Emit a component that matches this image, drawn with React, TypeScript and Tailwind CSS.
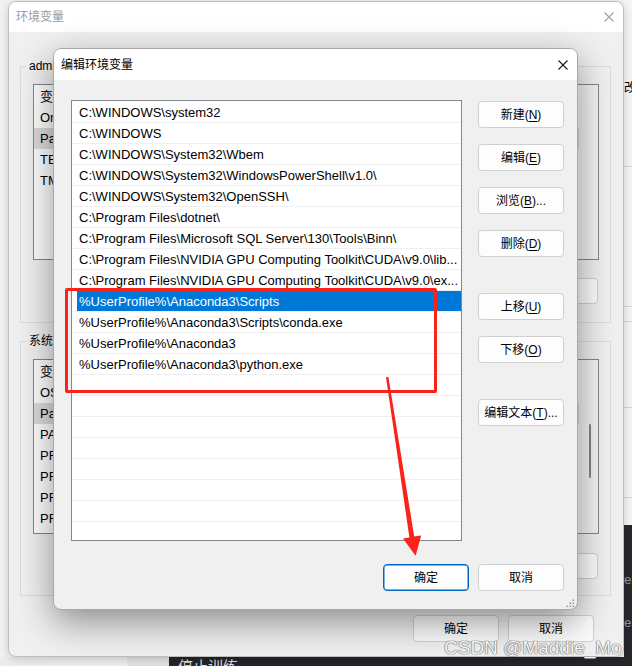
import React from "react";

const FONT = "font-['Liberation_Sans','Noto_Sans_CJK_SC',sans-serif]";

const PATHS = [
  "C:\\WINDOWS\\system32",
  "C:\\WINDOWS",
  "C:\\WINDOWS\\System32\\Wbem",
  "C:\\WINDOWS\\System32\\WindowsPowerShell\\v1.0\\",
  "C:\\WINDOWS\\System32\\OpenSSH\\",
  "C:\\Program Files\\dotnet\\",
  "C:\\Program Files\\Microsoft SQL Server\\130\\Tools\\Binn\\",
  "C:\\Program Files\\NVIDIA GPU Computing Toolkit\\CUDA\\v9.0\\lib...",
  "C:\\Program Files\\NVIDIA GPU Computing Toolkit\\CUDA\\v9.0\\ex...",
  "%UserProfile%\\Anaconda3\\Scripts",
  "%UserProfile%\\Anaconda3\\Scripts\\conda.exe",
  "%UserProfile%\\Anaconda3",
  "%UserProfile%\\Anaconda3\\python.exe",
];

const USER_VARS = ["变量", "OneDrive", "Path", "TEMP", "TMP"];
const SYS_VARS = [
  "变量",
  "OS",
  "Path",
  "PATHEXT",
  "PROCESSOR_ARCHITECTURE",
  "PROCESSOR_IDENTIFIER",
  "PROCESSOR_LEVEL",
  "PROCESSOR_REVISION",
];

function CloseIcon({ color }: { color: string }) {
  return (
    <svg width="10" height="10" viewBox="0 0 10 10">
      <path d="M0.5 0.5L9.5 9.5M9.5 0.5L0.5 9.5" stroke={color} strokeWidth="1.1" />
    </svg>
  );
}

function Btn({
  label,
  mn,
  rest = "",
  primary = false,
  h = "h-[27px]",
}: {
  label: string;
  mn?: string;
  rest?: string;
  primary?: boolean;
  h?: string;
}) {
  return (
    <div
      className={`w-[86px] ${h} shrink-0 rounded-[4px] border bg-[#fdfdfd] flex items-center justify-center text-[12px] text-black ${
        primary ? "border-[#0067c0] shadow-[inset_0_0_0_0.5px_#0067c0]" : "border-[#d0d0d0]"
      }`}
    >
      {label}
      {mn && (
        <>
          (<span className="underline underline-offset-2">{mn}</span>){rest}
        </>
      )}
    </div>
  );
}

function VarList({ rows, h }: { rows: string[]; h: string }) {
  return (
    <div className={`${h} border border-[#828790] bg-white flex overflow-hidden`}>
      <div className="flex-1 flex flex-col pt-[1px]">
        {rows.map((r, i) => (
          <div
            key={r}
            className={`h-[21px] shrink-0 flex items-center pl-[6px] text-[13px] ${
              i === 2 ? "bg-[#dcdcdc]" : ""
            } text-black`}
          >
            {r}
          </div>
        ))}
      </div>
      <div className="w-[19px] bg-[#f3f3f3] relative" />
    </div>
  );
}

function BackgroundWindow() {
  return (
    <div className="absolute left-[8px] top-[1px] w-[616px] h-[656px] rounded-lg border border-[#bfbfbf] bg-[#f0f0f0] flex flex-col overflow-hidden shadow-[0_2px_10px_rgba(0,0,0,0.18)]">
      <div className="h-[30px] bg-white flex items-center justify-between pl-[7px] pr-[9px] shrink-0">
        <span className="text-[12px] text-[#9a9a9a]">环境变量</span>
        <CloseIcon color="#a0a0a0" />
      </div>
      <div className="flex flex-col pl-[11px] pr-[12px]">
        <fieldset className="mt-[26px] border border-[#dcdcdc] pl-[12px] pr-[11px] pt-[10px] pb-[18px]">
          <legend className="-ml-[7px] px-[3px] text-[12px] leading-4 text-black">
            administrator 的用户变量(U)
          </legend>
          <VarList rows={USER_VARS} h="h-[176px]" />
          <div className="mt-[18px] flex justify-end gap-[9px] pr-px">
            <Btn label="新建" mn="N" rest="..." h="h-[26px]" />
            <Btn label="编辑" mn="E" rest="..." h="h-[26px]" />
            <Btn label="删除" mn="D" h="h-[26px]" />
          </div>
        </fieldset>
        <fieldset className="mt-[10px] border border-[#dcdcdc] pl-[12px] pr-[11px] pt-[10px] pb-[16px]">
          <legend className="-ml-[7px] px-[3px] text-[12px] leading-4 text-black">系统变量(S)</legend>
          <div className="relative">
            <VarList rows={SYS_VARS} h="h-[175px]" />
            <div className="absolute right-[8px] top-[65px] w-[2px] h-[54px] rounded-full bg-[#858585]" />
          </div>
          <div className="mt-[19px] flex justify-end gap-[9px] pr-px">
            <Btn label="新建" mn="W" rest="..." h="h-[26px]" />
            <Btn label="编辑" mn="I" rest="..." h="h-[26px]" />
            <Btn label="删除" mn="L" h="h-[26px]" />
          </div>
        </fieldset>
        <div className="mt-[19px] flex justify-end gap-[9px] pr-[17px]">
          <Btn label="确定" />
          <Btn label="取消" />
        </div>
      </div>
    </div>
  );
}

function EditDialog() {
  const rows: (string | null)[] = [...PATHS, ...Array(9).fill(null)];
  return (
    <div className="absolute left-[53px] top-[48px] w-[525px] h-[562px] rounded-lg border border-[#a8a8a8] bg-[#f0f0f0] flex flex-col overflow-hidden shadow-[0_12px_36px_rgba(0,0,0,0.42)]">
      <div className="h-[31px] bg-white flex items-center justify-between pl-[7px] pr-[9px] shrink-0">
        <span className="text-[12px] text-black">编辑环境变量</span>
        <CloseIcon color="#1a1a1a" />
      </div>
      <div className="flex pl-[17px] pt-[20px]">
        <div className="w-[391px] h-[441px] border border-[#828790] bg-white flex flex-col overflow-hidden pt-px">
          {rows.map((p, i) => (
            <div
              key={i}
              className="h-[21px] shrink-0 border-b border-[#f0f0f0] pl-[5px] flex"
            >
              <div
                className={`flex-1 flex items-center pl-[2px] pt-px overflow-hidden whitespace-nowrap text-[13px] ${
                  i === 9 ? "bg-[#0078d7] text-white" : "text-black"
                }`}
              >
                {p}
              </div>
            </div>
          ))}
        </div>
        <div className="ml-4 pt-[1px] flex flex-col">
          <Btn label="新建" mn="N" />
          <div className="mt-4">
            <Btn label="编辑" mn="E" />
          </div>
          <div className="mt-4">
            <Btn label="浏览" mn="B" rest="..." />
          </div>
          <div className="mt-4">
            <Btn label="删除" mn="D" />
          </div>
          <div className="mt-[36px]">
            <Btn label="上移" mn="U" />
          </div>
          <div className="mt-4">
            <Btn label="下移" mn="O" />
          </div>
          <div className="mt-[36px]">
            <Btn label="编辑文本" mn="T" rest="..." />
          </div>
        </div>
      </div>
      <div className="mt-[23px] flex justify-end gap-[9px] pr-[13px]">
        <Btn label="确定" primary />
        <Btn label="取消" />
      </div>
      <svg className="absolute right-[2px] bottom-[1px]" width="9" height="9" viewBox="0 0 9 9">
        {[
          [7, 1],
          [4, 4],
          [7, 4],
          [1, 7],
          [4, 7],
          [7, 7],
        ].map(([x, y]) => (
          <rect key={`${x}-${y}`} x={x - 0.5} y={y - 0.5} width="1.6" height="1.6" fill="#9a9a9a" />
        ))}
      </svg>
    </div>
  );
}

export default function App() {
  return (
    <div className={`relative w-[632px] h-[666px] overflow-hidden bg-[#f3f3f3] ${FONT}`}>
      {/* window behind on the right */}
      <div className="absolute left-[624px] top-0 w-[8px] h-[525px] bg-[#f5f5f5] overflow-hidden">
        <div className="mt-[81px] text-[12px] leading-[14px] text-black">改</div>
        <div className="mt-[71px] h-px bg-[#d6d6d6]" />
        <div className="mt-[139px] h-px bg-[#d6d6d6]" />
        <div className="mt-[14px] h-px bg-[#d6d6d6]" />
        <div className="mt-[85px] h-px bg-[#d6d6d6]" />
        <div className="mt-[89px] h-px bg-[#d6d6d6]" />
      </div>
      <div className="absolute left-[624px] top-[525px] w-[8px] h-[141px] bg-[#27282c] overflow-hidden text-[13px] text-[#9a9a9a]">
        <div className="mt-[47px] leading-4">er</div>
        <div className="mt-[27px] leading-4">er</div>
      </div>
      {/* bottom strip */}
      <div className="absolute left-0 top-[657px] w-[632px] h-[9px] flex">
        <div className="w-[127px] bg-[#ededed]" />
        <div className="w-[42px] bg-[#e2e2e2]" />
        <div className="flex-1 bg-[#25262b] pl-[9px] text-[15px] leading-[20px] text-[#dedede] overflow-hidden">
          停止训练
        </div>
      </div>

      <BackgroundWindow />
      <EditDialog />

      {/* annotation */}
      <div className="absolute left-[65px] top-[288px] w-[372px] h-[105px] border-[3.5px] border-[#fa2319] rounded-[2px]" />
      <svg className="absolute left-0 top-0 pointer-events-none" width="632" height="666" viewBox="0 0 632 666">
        <polygon
          points="386,377.2 388.4,376.8 414.2,536.6 421.2,535.4 415.6,555.8 403,538.6 409.4,537.4"
          fill="#fa2319"
        />
      </svg>

      {/* watermark */}
      <div className="absolute left-[444px] top-[637px] text-[19px] leading-[22px] whitespace-nowrap font-['Liberation_Sans',sans-serif] text-[#f4f4f4] [text-shadow:0_0_1px_#6a6a6a,0_0_1px_#6a6a6a,0_0_1px_#6a6a6a]">
        CSDN @Maddie_Mo
      </div>
    </div>
  );
}
